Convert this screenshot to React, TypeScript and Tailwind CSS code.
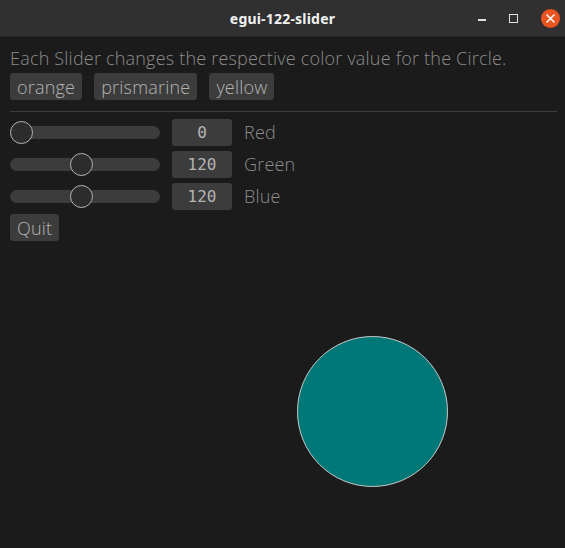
import { useState } from "react";

const presets: Record<string, [number, number, number]> = {
  orange: [255, 165, 0],
  prismarine: [0, 128, 128],
  yellow: [255, 255, 0],
};

function Slider({ value, onChange }: { value: number; onChange: (v: number) => void }) {
  const left = (value / 255) * 127;
  return (
    <div
      className="relative w-[150px] h-[27px] flex items-center cursor-pointer"
      onMouseDown={(e) => {
        const rect = e.currentTarget.getBoundingClientRect();
        const v = Math.round(((e.clientX - rect.left - 10.5) / 127) * 255);
        onChange(Math.max(0, Math.min(255, v)));
      }}
    >
      <div className="w-full h-[13px] rounded-full bg-[#3c3c3c]" />
      <div
        className="absolute top-[2px] w-[23px] h-[23px] rounded-full border-[1.5px] border-[#b4b4b4] bg-[#2c2c2c]"
        style={{ left }}
      />
    </div>
  );
}

export default function App() {
  const [rgb, setRgb] = useState<[number, number, number]>([0, 120, 120]);
  const names = ["Red", "Green", "Blue"];

  return (
    <div className="w-[565px] h-[548px] flex flex-col bg-[#1b1b1b] overflow-hidden font-light tracking-[0.2px]" style={{ fontFamily: "'Open Sans', sans-serif" }}>
      <div className="h-[37px] shrink-0 bg-[#303030] relative flex items-center justify-center border-b border-[#262626]">
        <span className="text-[14px] font-bold text-[#f2f2f2] tracking-[0.2px]" style={{ fontFamily: "'Noto Sans', sans-serif" }}>
          egui-122-slider
        </span>
        <div className="absolute right-[5px] top-0 h-[36px] flex items-center gap-[23px]">
          <div className="w-[8px] h-[1.5px] bg-[#e0e0e0] mt-[4px]" />
          <div className="w-[9px] h-[9px] border-[1.5px] border-[#e0e0e0]" />
          <div className="w-[19px] h-[19px] rounded-full bg-[#e95420] flex items-center justify-center">
            <svg width="9" height="9" viewBox="0 0 9 9">
              <path d="M1 1L8 8M8 1L1 8" stroke="#fff" strokeWidth="1.6" strokeLinecap="round" />
            </svg>
          </div>
        </div>
      </div>

      <div className="relative flex-1 px-[10px] pt-[8px]">
        <p className="text-[18px] leading-[26px] text-[#8c8c8c] whitespace-nowrap">
          Each Slider changes the respective color value for the Circle.
        </p>
        <div className="flex gap-[12px] mt-[2px]">
          {Object.keys(presets).map((n) => (
            <button
              key={n}
              className="h-[27px] px-[7px] rounded-[3px] bg-[#3c3c3c] text-[18px] text-[#b4b4b4] leading-none"
              onClick={() => setRgb(presets[n])}
            >
              {n}
            </button>
          ))}
        </div>
        <div className="h-px bg-[#3c3c3c] mt-[11px] mr-[-2px]" />
        <div className="flex flex-col gap-[5px] mt-[7px]">
          {rgb.map((v, i) => (
            <div key={i} className="flex items-center h-[27px]">
              <Slider
                value={v}
                onChange={(nv) => {
                  const next = [...rgb] as [number, number, number];
                  next[i] = nv;
                  setRgb(next);
                }}
              />
              <div
                className="ml-[12px] w-[60px] h-[27px] rounded-[3px] bg-[#3c3c3c] flex items-center justify-center text-[16px] text-[#b4b4b4] font-normal tracking-normal"
                style={{ fontFamily: "'DejaVu Sans Mono', monospace" }}
              >
                {v}
              </div>
              <span className="ml-[12px] text-[18px] text-[#8c8c8c]">{names[i]}</span>
            </div>
          ))}
        </div>
        <button className="mt-[4px] h-[27px] px-[7px] rounded-[3px] bg-[#3c3c3c] text-[18px] text-[#b4b4b4] leading-none">
          Quit
        </button>

        <div
          className="absolute left-[297px] top-[299px] w-[151px] h-[151px] rounded-full border border-[#c8c8c8]"
          style={{ backgroundColor: `rgb(${rgb[0]}, ${rgb[1]}, ${rgb[2]})` }}
        />
      </div>
    </div>
  );
}
